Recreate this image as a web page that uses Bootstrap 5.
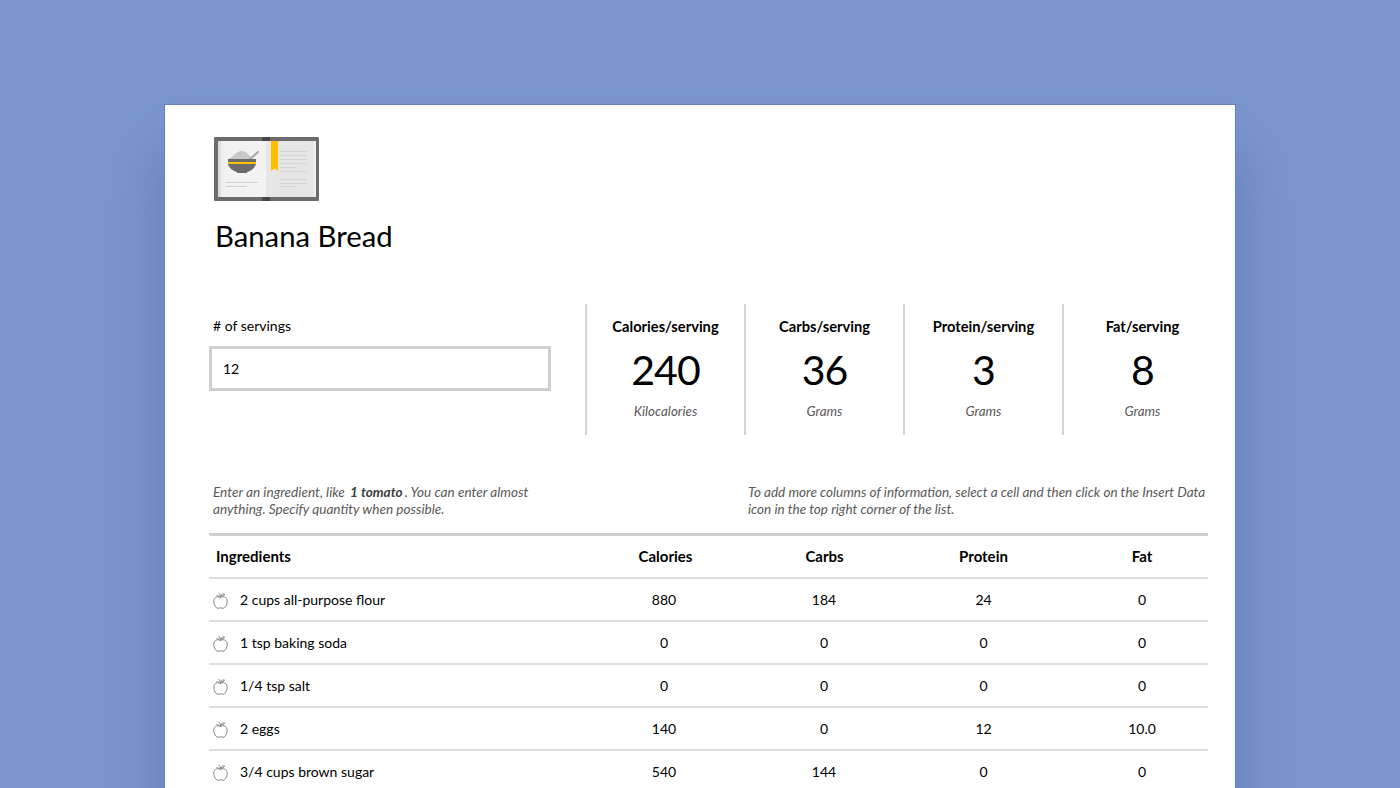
<!DOCTYPE html>
<html lang="en">
<head>
  <meta charset="UTF-8" />
  <meta name="viewport" content="width=device-width, initial-scale=1" />
  <title>Banana Bread</title>
  <link href="https://cdn.jsdelivr.net/npm/bootstrap@5.3.3/dist/css/bootstrap.min.css" rel="stylesheet">
  <style>
    html, body {
      height: 788px;
      overflow: hidden;
    }
    body {
      background-color: #7b96cf;
      color: #000;
      font-family: "Lato", "Open Sans", sans-serif;
      font-size: 14px;
      padding-top: 104px;
    }
    .sheet {
      width: 1072px;
      height: 760px;
      margin-left: 164px;
      padding: 32px 28px 0 44px;
      background: #fff;
      border: 1px solid #6480c6;
      border-bottom: 0;
      box-shadow: 0 45px 60px rgba(60, 85, 150, .42);
    }
    .book-logo {
      display: block;
      margin-left: 5px;
    }
    .recipe-title {
      margin: 16px 0 0 6px;
      font-size: 29.300px;
      font-weight: 400;
      line-height: 38px;
      font-family: "Lato", sans-serif;
    }
    .stats-row {
      margin-top: 49px;
      height: 131px;
    }
    .servings-box {
      width: 376px;
      flex: none;
    }
    .servings-box label {
      display: block;
      margin: 13px 0 11px 4px;
      line-height: 18px;
    }
    .servings-input {
      width: 342px;
      height: 45px;
      border: 3px solid #d0d0d0;
      border-radius: 0;
      padding: 0 11px;
      font-size: 14px;
      color: #000;
    }
    .stat-box {
      width: 159px;
      flex: none;
      border-left: 2px solid #d4d4d4;
      text-align: center;
    }
    .stat-title {
      margin-top: 13px;
      line-height: 18px;
      font-size: 14.700px;
      font-weight: 700;
    }
    .stat-value {
      font-size: 41px;
      letter-spacing: -1px;
      line-height: 50px;
      margin-top: 10px;
    }
    .stat-unit {
      margin-top: 8px;
      font-size: 13.400px;
      font-style: italic;
      line-height: 17px;
      color: #595959;
    }
    .hint-row {
      margin-top: 49px;
      height: 49px;
      font-size: 13.500px;
      font-style: italic;
      line-height: 17px;
      color: #595959;
    }
    .hint-left {
      width: 539px;
      flex: none;
      padding-left: 4px;
      font-size: 13.600px;
    }
    .hint-right {
      width: 460px;
      flex: none;
    }
    .hint-left b {
      margin: 0 2px;
      color: #404040;
    }
    .recipe-table {
      width: 999px;
      margin: 0;
      table-layout: fixed;
      border-top: 3px solid #d0d0d0;
    }
    .recipe-table th, .recipe-table td {
      height: 43px;
      padding: 1px 0 0;
      text-align: center;
      vertical-align: middle;
      border-bottom: 2px solid #dedede;
      color: #000;
    }
    .recipe-table th {
      padding-top: 0;
      font-size: 15px;
      font-weight: 700;
    }
    .recipe-table .name-cell {
      width: 377px;
      text-align: left;
    }
    .recipe-table th.name-cell {
      padding-left: 7px;
    }
    .recipe-table .num-cell {
      width: 159px;
    }
    .recipe-table .last-cell {
      width: 145px;
      padding-left: 13px;
    }
    .recipe-table td.calories-cell {
      padding-right: 3px;
    }
    .recipe-table td.carbs-cell {
      padding-right: 1px;
    }
    .apple-icon {
      margin: 0 12px 0 4px;
      vertical-align: -4px;
    }
  </style>
</head>
<body>
  <div class="sheet">
    <svg class="book-logo" width="105" height="64" viewBox="0 0 105 64">
      <rect width="105" height="64" rx="1" fill="#6b6b6b"/>
      <rect x="48" width="8" height="64" fill="#454545"/>
      <rect x="4" y="4" width="3" height="56" fill="#dcdcdc"/>
      <rect x="7" y="4" width="45" height="56" fill="#f2f2f2"/>
      <rect x="52" y="4" width="48" height="56" fill="#e6e6e6"/>
      <rect x="100" y="4" width="2" height="56" fill="#f0f0f0"/>
      <path d="M57 4h7v30l-3.500-2.500L57 34z" fill="#ffc000"/>
      <path d="M14 22c3 0 8-8 14-8s9 8 12 8z" fill="#c8c8c8"/>
      <path d="M36 22l8-7" stroke="#a6a6a6" stroke-width="2" stroke-linecap="round"/>
      <path d="M14 22h28v5c-1 4-5 7-9 8v1H23v-1c-4-1-8-4-9-8z" fill="#6b6b6b"/>
      <rect x="14" y="25" width="28" height="2" fill="#ffc000"/>
      <g fill="#d4d4d4">
        <rect x="12" y="45" width="32" height="1"/>
        <rect x="12" y="49" width="21" height="1"/>
        <rect x="66" y="14" width="27" height="1"/>
        <rect x="66" y="18" width="27" height="1"/>
        <rect x="66" y="22" width="27" height="1"/>
        <rect x="66" y="26" width="27" height="1"/>
        <rect x="66" y="30" width="17" height="1"/>
        <rect x="66" y="34" width="27" height="1"/>
        <rect x="66" y="42" width="27" height="1"/>
        <rect x="66" y="46" width="27" height="1"/>
        <rect x="66" y="49" width="17" height="1"/>
      </g>
    </svg>
    <h1 class="recipe-title">Banana Bread</h1>

    <div class="stats-row d-flex">
      <div class="servings-box">
        <label for="servings"># of servings</label>
        <input id="servings" class="servings-input" type="text" value="12">
      </div>
      <div class="stat-box">
        <div class="stat-title">Calories/serving</div>
        <div class="stat-value">240</div>
        <div class="stat-unit">Kilocalories</div>
      </div>
      <div class="stat-box">
        <div class="stat-title">Carbs/serving</div>
        <div class="stat-value">36</div>
        <div class="stat-unit">Grams</div>
      </div>
      <div class="stat-box">
        <div class="stat-title">Protein/serving</div>
        <div class="stat-value">3</div>
        <div class="stat-unit">Grams</div>
      </div>
      <div class="stat-box">
        <div class="stat-title">Fat/serving</div>
        <div class="stat-value">8</div>
        <div class="stat-unit">Grams</div>
      </div>
    </div>

    <div class="hint-row d-flex">
      <div class="hint-left">Enter an ingredient, like <b>1 tomato</b>. You can enter almost<br>anything. Specify quantity when possible.</div>
      <div class="hint-right">To add more columns of information, select a cell and then click on the Insert Data<br>icon in the top right corner of the list.</div>
    </div>

    <table class="table recipe-table">
      <thead>
        <tr>
          <th class="name-cell">Ingredients</th>
          <th class="num-cell">Calories</th>
          <th class="num-cell">Carbs</th>
          <th class="num-cell">Protein</th>
          <th class="last-cell">Fat</th>
        </tr>
      </thead>
      <tbody id="rows"></tbody>
    </table>
  </div>

  <script>
    const ingredients = [
      ["2 cups all-purpose flour", "880", "184", "24", "0"],
      ["1 tsp baking soda", "0", "0", "0", "0"],
      ["1/4 tsp salt", "0", "0", "0", "0"],
      ["2 eggs", "140", "0", "12", "10.0"],
      ["3/4 cups brown sugar", "540", "144", "0", "0"]
    ];
    const apple = '<svg class="apple-icon" width="15" height="17" viewBox="0 0 15 17" fill="none" stroke="#666" stroke-width=".8">' +
      '<path d="M7.500 5.500C5.500 4 1 4.500 .8 9c-.2 3.500 2.200 7.300 4.200 7.300 1 0 1.500-.5 2.500-.5s1.500.5 2.500.5c2 0 4.400-3.800 4.200-7.300-.2-4.500-4.700-5-6.700-3.500z"/>' +
      '<path d="M7.500 5.500C7.300 3.500 6.800 2 5.500.8M7.600 4c1-1.800 2.500-2.300 4-2-.6 1.500-2.300 2.500-4 2zM3.500 3.500c1 0 2 .5 3 1.800"/></svg>';
    document.getElementById("rows").innerHTML = ingredients.map(r =>
      `<tr><td class="name-cell">${apple}${r[0]}</td><td class="calories-cell">${r[1]}</td><td class="carbs-cell">${r[2]}</td><td>${r[3]}</td><td class="last-cell">${r[4]}</td></tr>`
    ).join("");
  </script>
  <script src="https://cdn.jsdelivr.net/npm/bootstrap@5.3.3/dist/js/bootstrap.bundle.min.js"></script>
</body>
</html>
